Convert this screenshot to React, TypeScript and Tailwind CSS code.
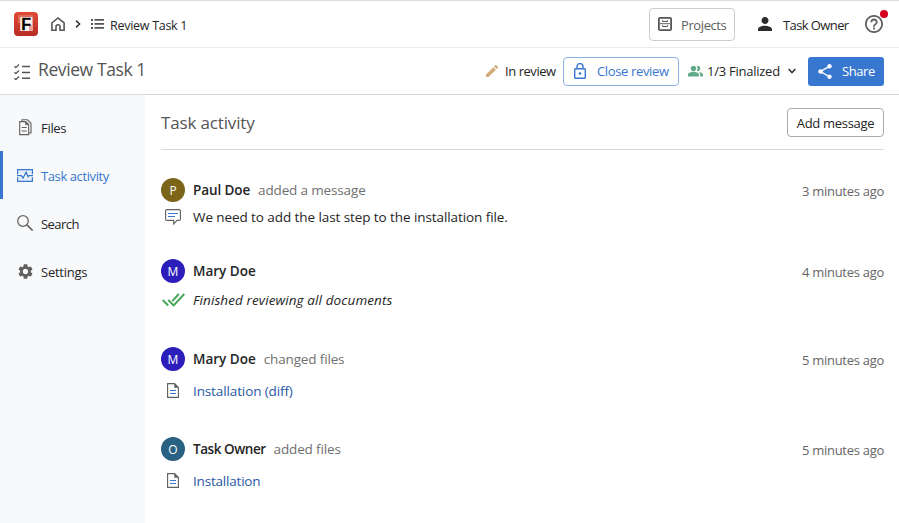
import type { ReactNode } from "react";

type IconProps = { className?: string };

function HomeIcon() {
  return (
    <svg className="h-[14px] w-[14px] shrink-0" viewBox="0 0 14 14" fill="none" stroke="#555" strokeWidth="1.6">
      <path d="M.9 6 7 1l6.100 5v7.200H9V9.800a2 2 0 0 0-4 0v3.400H.9z" />
    </svg>
  );
}

function ListIcon() {
  return (
    <svg className="h-[12px] w-[13px] shrink-0" viewBox="0 0 13 12" fill="#555">
      <path d="M0 1h2v2H0zM0 5h2v2H0zM0 9h2v2H0zM3.500 1H13v1.700H3.500zM3.500 5H13v1.700H3.500zM3.500 9H13v1.700H3.500z" />
    </svg>
  );
}

function ChecklistIcon() {
  return (
    <svg className="h-[16px] w-[16px] shrink-0" viewBox="0 0 16 16" fill="none" stroke="#555">
      <path d="m.4 2.300 1.400 1.400L5 .5M.4 8.300l1.400 1.400L5 6.500M.4 14.300l1.400 1.400L5 12.500" strokeWidth="1.300" />
      <path d="M8 2.500h8M8 8.500h8M8 14.300h8" strokeWidth="1.500" />
    </svg>
  );
}

function CabinetIcon() {
  return (
    <svg className="h-[14px] w-[14px] shrink-0" viewBox="0 0 14 14" fill="none" stroke="#555">
      <rect x=".9" y=".9" width="12.200" height="12.200" rx="1.200" strokeWidth="1.800" />
      <path d="M4.500 3.200v1.300h5V3.200M4.500 8.200v1.300h5V8.200" strokeWidth="1" />
      <path d="M2 6.700h10" strokeWidth=".9" />
    </svg>
  );
}

function PersonIcon() {
  return (
    <svg className="h-[14px] w-[14px] shrink-0" viewBox="4 4 16 16" fill="#2b2b2b">
      <path d="M12 12c2.210 0 4-1.790 4-4s-1.790-4-4-4-4 1.790-4 4 1.790 4 4 4zm0 2c-2.670 0-8 1.340-8 4v2h16v-2c0-2.660-5.330-4-8-4z" />
    </svg>
  );
}

function HelpIcon() {
  return (
    <svg className="h-[18px] w-[18px] shrink-0" viewBox="2 2 20 20" fill="#606060">
      <path d="M11 18h2v-2h-2v2zm1-16C6.480 2 2 6.480 2 12s4.480 10 10 10 10-4.480 10-10S17.520 2 12 2zm0 18c-4.410 0-8-3.590-8-8s3.590-8 8-8 8 3.590 8 8-3.590 8-8 8zm0-14c-2.210 0-4 1.790-4 4h2c0-1.100.9-2 2-2s2 .9 2 2c0 2-3 1.750-3 5h2c0-2.250 3-2.500 3-5 0-2.210-1.790-4-4-4z" />
    </svg>
  );
}

function PencilIcon() {
  return (
    <svg className="h-[12px] w-[12px] shrink-0" viewBox="3 3 18 18" fill="#d0aa78">
      <path d="M3 17.250V21h3.750L17.810 9.940l-3.750-3.750L3 17.250zM20.710 7.040a.996.996 0 0 0 0-1.410l-2.340-2.340a.996.996 0 0 0-1.410 0l-1.830 1.830 3.750 3.750 1.830-1.830z" />
    </svg>
  );
}

function LockIcon() {
  return (
    <svg className="h-[16px] w-[12px] shrink-0" viewBox="0 0 12 16" fill="none" stroke="#3877cf" strokeWidth="1.400">
      <rect x=".7" y="5.800" width="10.600" height="9.500" rx=".8" />
      <path d="M3 5.800V3.600a3 3 0 0 1 6 0v2.200" />
      <circle cx="6" cy="10.500" r="1.300" fill="#3877cf" stroke="none" />
    </svg>
  );
}

function GroupIcon() {
  return (
    <svg className="h-[11px] w-[15px] shrink-0" viewBox="1 5 22 15" fill="#62aa87">
      <path d="M16.670 13.130C18.040 14.060 19 15.320 19 17v3h4v-3c0-2.180-3.570-3.470-6.330-3.870zM15 12c2.210 0 4-1.790 4-4s-1.790-4-4-4c-.47 0-.91.100-1.330.240C14.500 5.270 15 6.580 15 8s-.5 2.730-1.330 3.760c.42.140.86.240 1.330.240z" />
      <path d="M9 12c2.210 0 4-1.790 4-4s-1.790-4-4-4-4 1.790-4 4 1.790 4 4 4zm0 1c-2.670 0-8 1.340-8 4v3h16v-3c0-2.660-5.330-4-8-4z" />
    </svg>
  );
}

function ShareIcon() {
  return (
    <svg className="h-[15px] w-[14px] shrink-0" viewBox="3 2 18 20" fill="#fff">
      <path d="M18 16.080c-.76 0-1.440.3-1.960.77L8.910 12.700c.05-.23.090-.46.090-.7s-.04-.47-.09-.7l7.050-4.110c.54.5 1.250.81 2.040.81 1.660 0 3-1.340 3-3s-1.340-3-3-3-3 1.340-3 3c0 .24.040.47.090.7L8.040 9.810C7.500 9.310 6.790 9 6 9c-1.660 0-3 1.340-3 3s1.340 3 3 3c.79 0 1.500-.31 2.040-.81l7.120 4.160c-.05.21-.08.43-.08.65 0 1.610 1.310 2.920 2.920 2.920s2.920-1.310 2.920-2.920-1.310-2.920-2.920-2.920z" />
    </svg>
  );
}

function FilesIcon() {
  return (
    <svg className="h-[17px] w-[16px]" viewBox="0 0 16 17" fill="none" stroke="#606060" strokeWidth="1.100">
      <path d="M2.700 2.600h6l3 3v10h-9z" />
      <path d="M5 2.600V.8h5.500l3.500 3.500V14h-2.300" />
      <path d="M8.500 2.500v3.300h3.300z" fill="#606060" strokeWidth=".5" />
      <path d="M4.700 8.500h5M4.700 12h5" />
    </svg>
  );
}

function ActivityIcon() {
  return (
    <svg className="h-[13px] w-[16px]" viewBox="0 0 16 13" fill="#e3eefb" stroke="#3877cf" strokeWidth="1.200">
      <path d="M.6 5.200V.6h14.800v4.600M.6 8.200v4.200h14.800V8.200" />
      <path d="M0 6.700h4.300L6 9l3.200-5.700L11 7.700l1-1h4" fill="none" strokeWidth="1.300" />
    </svg>
  );
}

function SearchIcon() {
  return (
    <svg className="h-[16px] w-[16px]" viewBox="0 0 16 16" fill="none" stroke="#666">
      <circle cx="6" cy="6" r="5.300" strokeWidth="1.300" />
      <path d="m9.900 9.900 5.700 5.700" strokeWidth="1.600" />
    </svg>
  );
}

function GearIcon() {
  return (
    <svg className="h-[15px] w-[15px] translate-x-px" viewBox="2.200 2 19.600 20" fill="#606060">
      <path d="M19.140 12.940c.04-.3.060-.61.060-.94 0-.32-.02-.64-.07-.94l2.030-1.580c.18-.14.230-.41.120-.61l-1.920-3.320c-.12-.22-.37-.29-.59-.22l-2.390.96c-.5-.38-1.030-.7-1.620-.94l-.36-2.540c-.04-.24-.24-.41-.48-.41h-3.840c-.24 0-.43.170-.47.410l-.36 2.540c-.59.240-1.130.570-1.620.940l-2.390-.96c-.22-.08-.47 0-.59.220L2.740 8.870c-.12.210-.08.470.120.610l2.030 1.580c-.05.3-.09.630-.09.940s.02.640.07.940l-2.030 1.580c-.18.140-.23.410-.12.610l1.920 3.320c.12.220.370.290.590.220l2.390-.96c.5.380 1.030.7 1.620.94l.36 2.540c.05.240.240.410.480.410h3.840c.24 0 .44-.17.470-.41l.36-2.540c.59-.24 1.130-.56 1.620-.94l2.390.96c.22.080.470 0 .59-.22l1.920-3.320c.12-.22.070-.47-.12-.61l-2.010-1.580zM12 15.600c-1.980 0-3.600-1.620-3.600-3.600s1.620-3.600 3.600-3.600 3.600 1.620 3.600 3.600-1.620 3.600-3.600 3.600z" />
    </svg>
  );
}

function MessageIcon() {
  return (
    <svg className="h-[16px] w-[16px]" viewBox="0 0 16 16" fill="none" stroke="#606060" strokeWidth="1.100">
      <path d="M2 .6h12a1.400 1.400 0 0 1 1.400 1.400v8a1.400 1.400 0 0 1-1.400 1.400h-2L8.700 15v-3.600H2A1.400 1.400 0 0 1 .6 10V2A1.400 1.400 0 0 1 2 .6z" />
      <path d="M3 4.500h10M3 7.500h7" stroke="#3877cf" />
    </svg>
  );
}

function DoubleCheckIcon() {
  return (
    <svg className="h-[14px] w-[23px]" viewBox="0 0 23 14" fill="none" stroke="#45a557" strokeWidth="1.900">
      <path d="m.7 7 5.500 5.500M6.200 7l5.500 5.500L22.300 1M10.300 8.200 16.800 1" />
    </svg>
  );
}

function DocumentIcon() {
  return (
    <svg className="-mt-px h-[15px] w-[12px]" viewBox="0 0 12 15" fill="none" stroke="#606060" strokeWidth="1.100">
      <path d="M.6.6h7l3.800 3.800v10H.6z" />
      <path d="M7.500.6v4h4z" fill="#606060" strokeWidth=".5" />
      <path d="M3 7.500h6M3 10.500h6" stroke="#3877cf" />
    </svg>
  );
}

function Chevron({ className }: IconProps) {
  return (
    <svg className={className} viewBox="0 0 8 8" fill="none" stroke="#333" strokeWidth="1.500">
      <path d="m.6 2 3.400 3.600L7.400 2" />
    </svg>
  );
}

function AppLogo() {
  return (
    <svg className="h-6 w-6 shrink-0" viewBox="0 0 24 24">
      <defs>
        <linearGradient id="logo" x2="0" y2="1">
          <stop stopColor="#e04a35" />
          <stop offset="1" stopColor="#b92b27" />
        </linearGradient>
      </defs>
      <rect width="24" height="24" rx="4" fill="url(#logo)" />
      <path d="M4 3h15v3H7v5H4z" fill="#e06a59" />
      <path d="M6 5h13v14H6z" fill="#e9a49c" />
      <path d="M6.500 5H18v8h-3v6H6.500z" fill="#fbeeee" />
      <text x="7.300" y="17.500" fontFamily="Liberation Sans, sans-serif" fontWeight="700" fontSize="16" fill="#000" stroke="#000" strokeWidth=".3">F</text>
    </svg>
  );
}

const navItems = [
  { label: "Files", icon: <FilesIcon />, tracking: "tracking-[-0.3px]" },
  { label: "Task activity", icon: <ActivityIcon />, active: true, tracking: "tracking-[-0.4px]" },
  { label: "Search", icon: <SearchIcon />, tracking: "tracking-[-0.55px]" },
  { label: "Settings", icon: <GearIcon />, tracking: "tracking-[-0.25px]" },
];

type Entry = {
  name: string;
  nameClass: string;
  initial: string;
  color: string;
  action?: string;
  time: string;
  icon: ReactNode;
  detail: string;
  detailClass: string;
  className: string;
  rowClass: string;
};

const entries: Entry[] = [
  { name: "Paul Doe", nameClass: "tracking-[-0.1px]", initial: "P", color: "bg-[#7c6519]", action: "added a message", time: "3 minutes ago", icon: <MessageIcon />, detail: "We need to add the last step to the installation file.", detailClass: "text-[#252525] tracking-[-0.08px]", className: "h-[81px]", rowClass: "mt-[3px]" },
  { name: "Mary Doe", nameClass: "tracking-[0px]", initial: "M", color: "bg-[#2b1ebb]", time: "4 minutes ago", icon: <DoubleCheckIcon />, detail: "Finished reviewing all documents", detailClass: "text-[#252525] italic tracking-[0.1px]", className: "h-[88px]", rowClass: "mt-[5px]" },
  { name: "Mary Doe", nameClass: "tracking-[0px]", initial: "M", color: "bg-[#2b1ebb]", action: "changed files", time: "5 minutes ago", icon: <DocumentIcon />, detail: "Installation (diff)", detailClass: "text-[#2758a5] tracking-[-0.12px]", className: "h-[90px]", rowClass: "mt-[8px]" },
  { name: "Task Owner", nameClass: "tracking-[-0.45px]", initial: "O", color: "bg-[#286181]", action: "added files", time: "5 minutes ago", icon: <DocumentIcon />, detail: "Installation", detailClass: "text-[#2758a5] tracking-[-0.2px]", className: "h-[60px]", rowClass: "mt-[8px]" },
];

function ActivityEntry({ entry }: { entry: Entry }) {
  return (
    <article className={entry.className}>
      <div className="flex h-6 items-center">
        <span className={`flex h-6 w-6 items-center justify-center rounded-full pt-px text-[12px] font-medium text-white ${entry.color}`}>{entry.initial}</span>
        <span className={`ml-2 pt-px text-[13.500px] font-semibold text-[#252525] ${entry.nameClass}`}>{entry.name}</span>
        {entry.action && <span className="ml-2 text-[13.500px] tracking-[-0.15px] text-[#707070]">{entry.action}</span>}
        <span className="ml-auto pt-[3px] text-[13px] tracking-[-0.28px] text-[#666]">{entry.time}</span>
      </div>
      <div className={`flex h-6 items-center ${entry.rowClass}`}>
        <span className="flex w-6 justify-center">{entry.icon}</span>
        <span className={`ml-2 text-[13.500px] ${entry.detailClass}`}>{entry.detail}</span>
      </div>
    </article>
  );
}

export default function App() {
  return (
    <div className="flex h-[523px] w-[899px] flex-col overflow-hidden whitespace-nowrap bg-white font-['Open_Sans',sans-serif] text-[13px] text-[#252525]">
      <header className="flex h-12 shrink-0 items-center border-y border-t-[#ddd] border-b-[#ececec] pl-[14px] pr-[15px]">
        <AppLogo />
        <span className="ml-[13px]"><HomeIcon /></span>
        <Chevron className="ml-[9px] h-2 w-2 -rotate-90" />
        <span className="ml-[9px]"><ListIcon /></span>
        <span className="ml-[6px] pt-[4px] text-[12.500px] tracking-[-0.28px]">Review Task 1</span>
        <button className="ml-auto flex h-[33px] w-[86px] items-center rounded border border-[#ccc] pl-2">
          <CabinetIcon />
          <span className="ml-[9px] pt-[3px] tracking-[-0.4px] text-[#606060]">Projects</span>
        </button>
        <span className="ml-[23px]"><PersonIcon /></span>
        <span className="ml-[11px] w-[66px] pt-[3px] tracking-[-0.6px]">Task Owner</span>
        <span className="relative ml-[16px] flex w-[19px]">
          <HelpIcon />
          <span className="absolute -top-[5px] left-[15px] h-2 w-2 rounded-full bg-[#d5001e]" />
        </span>
      </header>

      <div className="flex h-[47px] shrink-0 items-center border-b border-[#d8d8d8] pl-[14px] pr-[15px]">
        <span className="mt-px"><ChecklistIcon /></span>
        <h1 className="-mt-[4px] ml-2 text-[17.500px] tracking-[-0.4px] text-[#555]">Review Task 1</h1>
        <span className="ml-auto"><PencilIcon /></span>
        <span className="ml-[7px] w-[51px] pt-px tracking-[-0.45px]">In review</span>
        <button className="ml-[7px] flex h-[29px] w-[116px] items-center rounded border border-[#8fb1e2] pl-[10px]">
          <LockIcon />
          <span className="ml-[11px] pt-[2px] tracking-[-0.35px] text-[#3877cf]">Close review</span>
        </button>
        <span className="ml-[9px]"><GroupIcon /></span>
        <span className="ml-1 w-[73px] pt-[2px] tracking-[-0.25px]">1/3 Finalized</span>
        <Chevron className="ml-[8px] h-2 w-2" />
        <button className="ml-3 flex h-[29px] w-[76px] items-center rounded-[3px] bg-[#3877cf] pl-[10px] text-white">
          <ShareIcon />
          <span className="ml-[10px] pt-[2px] tracking-[-0.4px]">Share</span>
        </button>
      </div>

      <div className="flex min-h-0 flex-1">
        <nav className="w-[145px] shrink-0 bg-[#f8f9fb] pt-2">
          {navItems.map((item) => (
            <div key={item.label} className={`flex h-12 items-center border-l-[3px] pl-[14px] ${item.active ? "border-[#3877cf] text-[#3877cf]" : "border-transparent"}`}>
              <span className="flex w-4">{item.icon}</span>
              <span className={`ml-2 pt-[3px] ${item.tracking}`}>{item.label}</span>
            </div>
          ))}
        </nav>
        <main className="flex-1 pl-4 pr-[15px]">
          <div className="flex h-[55px] items-center justify-between border-b border-[#d8d8d8]">
            <h2 className="pt-[2px] text-[17px] tracking-[-0.15px] text-[#555]">Task activity</h2>
            <button className="h-[29px] w-[97px] rounded border border-[#aaa] pt-[3px] tracking-[-0.3px]">Add message</button>
          </div>
          <div className="pt-7">
            {entries.map((entry, index) => <ActivityEntry key={index} entry={entry} />)}
          </div>
        </main>
      </div>
    </div>
  );
}
